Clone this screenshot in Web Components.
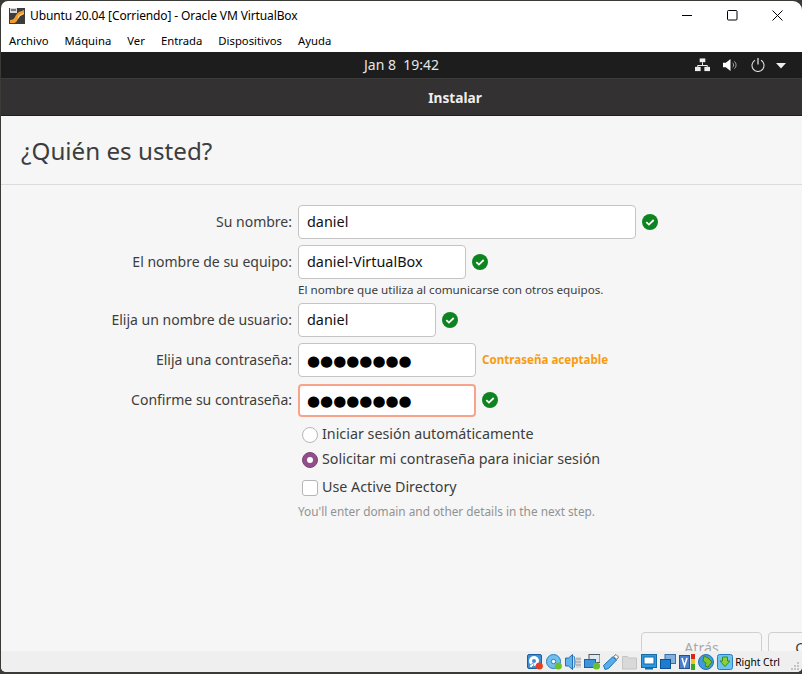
<!DOCTYPE html>
<html lang="es">
<head>
<meta charset="utf-8">
<title>Ubuntu 20.04 - Oracle VM VirtualBox</title>
<style>
html,body{margin:0;height:100%;background:#3a3a36;overflow:hidden}
</style>
</head>
<body>
<vb-window>
  <vb-titlebar slot="chrome">Ubuntu 20.04 [Corriendo] - Oracle VM VirtualBox</vb-titlebar>
  <vb-menubar slot="chrome"></vb-menubar>
  <gnome-topbar>Jan 8&nbsp;&nbsp;19:42</gnome-topbar>
  <installer-header>Instalar</installer-header>
  <installer-page heading="¿Quién es usted?">
    <form-row label="Su nombre:" width="338" value="daniel" status="ok"></form-row>
    <form-row label="El nombre de su equipo:" width="168" value="daniel-VirtualBox" status="ok" gap="6" help="El nombre que utiliza al comunicarse con otros equipos."></form-row>
    <form-row label="Elija un nombre de usuario:" width="138" value="daniel" status="ok" gap="4"></form-row>
    <form-row label="Elija una contraseña:" width="178" value="●●●●●●●●" secret status="Contraseña aceptable" gap="6"></form-row>
    <form-row label="Confirme su contraseña:" width="178" value="●●●●●●●●" secret focused status="ok" gap="7"></form-row>
    <login-options></login-options>
    <nav-buttons></nav-buttons>
  </installer-page>
  <vb-statusbar slot="status"></vb-statusbar>
</vb-window>

<script>
class VbWindow extends HTMLElement{
  constructor(){
    super()
    this.attachShadow({mode:"open"}).innerHTML = `
    <style>
    :host{display:block;height:100vh;box-sizing:border-box;padding:1px 0 2px 1px}
    .frame{height:100%;display:flex;flex-direction:column;background:#fff;border-radius:7px 9px 5px 5px;overflow:hidden;position:relative}
    .guest{flex:1;min-height:0;display:flex;flex-direction:column;overflow:hidden;background:#f6f6f6}
    </style>
    <div class="frame">
      <slot name="chrome"></slot>
      <div class="guest"><slot></slot></div>
      <slot name="status"></slot>
    </div>`
  }
}

class VbTitlebar extends HTMLElement{
  constructor(){
    super()
    this.attachShadow({mode:"open"}).innerHTML = `
    <style>
    :host{display:flex;align-items:center;height:29px;font:12px/16px "Noto Sans",sans-serif;color:#000;padding-left:8px;flex:none}
    .logo{width:16px;height:16px;margin-right:5px;flex:none}
    .text{flex:1;letter-spacing:-.12px}
    .btn{width:45px;height:29px;display:flex;align-items:center;justify-content:center}
    .btns{display:flex;margin-right:2px}
    </style>
    <svg class="logo" viewBox="0 0 16 16">
      <rect width="16" height="16" fill="#3c3c3c"/>
      <rect x="1" y="0" width="7" height="5" fill="#d9d9d9"/>
      <rect x="2" y="1" width="5" height="2" fill="#777"/>
      <path d="M1 12c3 0 4-1 5-3s2-4 4-5l5-2v4l-4 2c-1 1-2 3-3 5-1 1-2 2-3 2H1z" fill="#f29a2e"/>
      <path d="M9 8l3-2 3-1v1l-4 2-2 3z" fill="#ffd07a"/>
    </svg>
    <span class="text"><slot></slot></span>
    <div class="btns">
      <div class="btn"><svg width="11" height="11"><path d="M0 5.500h10" stroke="#000"/></svg></div>
      <div class="btn"><svg width="11" height="11"><rect x=".5" y=".5" width="9.500" height="9.500" rx="1" fill="none" stroke="#000"/></svg></div>
      <div class="btn"><svg width="11" height="11"><path d="M.5 .5l10 10M10.500 .5l-10 10" stroke="#000" fill="none"/></svg></div>
    </div>`
  }
}

class VbMenubar extends HTMLElement{
  constructor(){
    super()
    const items = ["Archivo","Máquina","Ver","Entrada","Dispositivos","Ayuda"]
    this.attachShadow({mode:"open"}).innerHTML = `
    <style>
    :host{display:flex;height:22px;align-items:center;gap:16px;padding-left:8px;font:11.3px/16px "Noto Sans",sans-serif;color:#000;flex:none}
    </style>
    ${items.map(i=>`<span>${i}</span>`).join("")}`
  }
}

class GnomeTopbar extends HTMLElement{
  constructor(){
    super()
    this.attachShadow({mode:"open"}).innerHTML = `
    <style>
    :host{display:flex;align-items:center;justify-content:center;height:27px;background:#1d1d1d;color:#e6e6e6;font:14px/18px "Noto Sans",sans-serif;position:relative;flex:none;box-sizing:border-box;border-bottom:1px solid #3b3b3b}
    .tray{position:absolute;right:16px;top:6px;display:flex;align-items:center;gap:13px;height:14px}
    svg{display:block}
    </style>
    <slot></slot>
    <div class="tray">
      <svg width="15" height="14" viewBox="0 0 16 14" fill="#eee"><rect x="5" y="0" width="6" height="4"/><path d="M7.500 4h1v3h5v2h-1V8H3.500v1h-1V7h5z"/><rect x="0" y="9" width="6" height="4.500"/><rect x="10" y="9" width="6" height="4.500"/></svg>
      <svg width="15" height="14" viewBox="0 0 16 14"><path d="M0 4.500h3L8 .5v13l-5-4H0z" fill="#fff"/><path d="M10 4.500a3 3 0 010 5M12 3a5 5 0 010 8" stroke="#aaa" fill="none"/></svg>
      <svg width="14" height="14" viewBox="0 0 14 14"><path d="M4 2.300a6 6 0 106 0" stroke="#ddd" fill="none" stroke-width="1.100"/><path d="M7 0v6.500" stroke="#eee" stroke-width="1.200"/></svg>
      <svg width="10" height="6" viewBox="0 0 10 6" style="margin:2px 0 0 -2px"><path d="M0 0h10L5 5.500z" fill="#eee"/></svg>
    </div>`
  }
}

class InstallerHeader extends HTMLElement{
  constructor(){
    super()
    this.attachShadow({mode:"open"}).innerHTML = `
    <style>
    :host{display:flex;align-items:center;justify-content:center;height:37px;box-sizing:border-box;padding:1px 0 0 107px;background:#333131;border-bottom:1px solid #1f1f1f;color:#eee;font:bold 13.7px/18px "Noto Sans",sans-serif;flex:none}
    </style>
    <slot></slot>`
  }
}

class InstallerPage extends HTMLElement{
  constructor(){
    super()
    this.attachShadow({mode:"open"}).innerHTML = `
    <style>
    :host{display:flex;flex-direction:column;flex:1;min-height:0;background:#f6f6f6;font-family:"Noto Sans",sans-serif}
    h1{margin:0;height:69px;box-sizing:border-box;padding:17px 0 0 20px;font:400 24.2px/36px "Noto Sans",sans-serif;color:#3d3d3d;border-bottom:1px solid #dcdcdc}
    .form{display:flex;flex-direction:column;padding-top:20px;flex:1}
    </style>
    <h1></h1>
    <div class="form"><slot></slot></div>`
  }
  connectedCallback(){
    this.shadowRoot.querySelector("h1").textContent = this.getAttribute("heading")
  }
}

class FormRow extends HTMLElement{
  constructor(){
    super()
    this.attachShadow({mode:"open"}).innerHTML = `
    <style>
    :host{display:grid;grid-template-columns:291px auto 1fr;column-gap:6px;align-items:center}
    .label{text-align:right;font-size:14px;color:#3d3d3d;white-space:nowrap;padding-bottom:2px}
    .entry{height:34px;box-sizing:border-box;border:1px solid #c4c4c4;border-radius:4px;background:#fff;padding:0 8px 2px;display:flex;align-items:center;font-size:14.4px;color:#111}
    .entry.secret{font:15px "DejaVu Sans",sans-serif;color:#000;padding:1px 8px 0}
    .entry.focused{border:2px solid #f7a48b;padding:1px 7px 0;height:33px}
    .status{display:flex;align-items:center;font:bold 11.6px "Noto Sans",sans-serif;color:#f99b11;padding-bottom:1px}
    .status svg{display:block}
    .help{grid-column:2 / 4;font-size:11.67px;line-height:16px;color:#3d3d3d;height:17px;margin-top:3px}
    </style>
    <div class="label"></div>
    <div class="entry"></div>
    <div class="status"></div>`
  }
  connectedCallback(){
    const root = this.shadowRoot
    root.querySelector(".label").textContent = this.getAttribute("label")
    const entry = root.querySelector(".entry")
    entry.textContent = this.getAttribute("value")
    entry.style.width = this.getAttribute("width") + "px"
    if(this.hasAttribute("secret")) entry.classList.add("secret")
    if(this.hasAttribute("focused")) entry.classList.add("focused")
    this.style.marginTop = (this.getAttribute("gap") || 0) + "px"
    const status = root.querySelector(".status")
    if(this.getAttribute("status") == "ok"){
      status.innerHTML = `<svg width="16" height="16" viewBox="0 0 16 16"><circle cx="8" cy="8" r="8" fill="#0e8420"/><path d="M4.300 8.200l2.600 2.400 4.800-4.600" fill="none" stroke="#fff" stroke-width="1.800"/></svg>`
    }else{
      status.textContent = this.getAttribute("status")
    }
    if(this.hasAttribute("help")){
      const help = document.createElement("div")
      help.className = "help"
      help.textContent = this.getAttribute("help")
      root.appendChild(help)
    }
  }
}

class LoginOptions extends HTMLElement{
  constructor(){
    super()
    this.attachShadow({mode:"open"}).innerHTML = `
    <style>
    :host{display:flex;flex-direction:column;padding-left:301px;color:#3d3d3d;font-size:14.3px;margin-top:5px}
    .opt{display:flex;align-items:center;gap:4px;height:25px}
    .opt span.t{padding-bottom:2px}
    .mark{width:16px;height:16px;box-sizing:border-box;border:1px solid #b6b6b6;background:#fff;border-radius:50%;flex:none}
    .mark.on{background:#924d8b;border-color:#7f4179;position:relative}
    .mark.on::after{content:"";position:absolute;left:4px;top:4px;width:6px;height:6px;border-radius:50%;background:#fff}
    .mark.box{border-radius:3px}
    .third{margin-top:3px}
    .hint{margin:3px 0 0 -4px;font-size:11.82px;line-height:16px;color:#929292}
    </style>
    <div class="opt"><span class="mark"></span><span class="t">Iniciar sesión automáticamente</span></div>
    <div class="opt"><span class="mark on"></span><span class="t">Solicitar mi contraseña para iniciar sesión</span></div>
    <div class="opt third"><span class="mark box"></span><span class="t">Use Active Directory</span></div>
    <div class="hint">You'll enter domain and other details in the next step.</div>`
  }
}

class NavButtons extends HTMLElement{
  constructor(){
    super()
    this.attachShadow({mode:"open"}).innerHTML = `
    <style>
    :host{display:flex;gap:6px;padding-left:640px;margin-top:auto;margin-bottom:-15px;width:max-content}
    .b{width:121px;height:34px;box-sizing:border-box;border:1px solid #cfcfcf;border-radius:4px;background:#f6f6f6;display:flex;justify-content:center;padding-top:6px;font-size:14.2px;line-height:18px;color:#a9a9a9}
    .next{color:#3d3d3d}
    </style>
    <div class="b">Atrás</div><div class="b next">Continuar</div>`
  }
}

class VbStatusbar extends HTMLElement{
  constructor(){
    super()
    const icons = [
      `<rect x=".5" y=".5" width="14" height="14" rx="1.500" fill="#3f8fd6" stroke="#1d5fa5"/><circle cx="7" cy="7" r="5" fill="#fff"/><circle cx="7" cy="7" r="2" fill="#3f8fd6"/><path d="M2 12l4-3 1 2-3 3z" fill="#fff" stroke="#1d5fa5" stroke-width=".5"/><circle cx="12.300" cy="12" r="3.600" fill="#e5401e"/>`,
      `<circle cx="7.500" cy="7.500" r="7" fill="#6fc0ee" stroke="#2a7cc0"/><circle cx="7.500" cy="7.500" r="2.200" fill="#fff" stroke="#2a7cc0"/><circle cx="12.300" cy="12" r="3.600" fill="#6cc02c"/>`,
      `<path d="M.5 4h3l4-3.500v15l-4-3.500h-3z" fill="#63b3e8" stroke="#1f70b6"/><path d="M8.500 2c1 0 1.500 3 1.500 6s-.5 6-1.500 6" fill="#9fd3f4" stroke="#1f70b6"/><rect x="11" y="3" width="5" height="11" fill="#d8d8d8"/><path d="M11 5h5M11 8h5M11 11h5" stroke="#999"/>`,
      `<rect x="5" y=".5" width="11" height="8" fill="#dfe8ef" stroke="#505a63"/><rect x=".5" y="5.500" width="11" height="8" fill="#3d94da" stroke="#1d5fa5"/><circle cx="12.500" cy="12" r="3.600" fill="#6cc02c"/>`,
      `<path d="M.5 11.500L9.500 3l4 3-8 8.500-3.500 1z" fill="#58aee8" stroke="#1f70b6"/><path d="M10.500 2.500L13 .5l2.500 2.500-1.500 2.500z" fill="#fff" stroke="#777"/>`,
      `<path d="M.5 2.500h5l1 1.500h8v11H.5z" fill="#d9d9d9" stroke="#c4c4c4"/>`,
      `<rect x=".5" y=".5" width="15" height="13" fill="#2f9ae0" stroke="#156aa8"/><rect x="3" y="3" width="10" height="7" fill="#fff" stroke="#156aa8"/><rect x="4" y="14" width="8" height="1.500" fill="#156aa8"/>`,
      `<rect x="5" y=".5" width="10.500" height="9" fill="#7fb0de" stroke="#3d6ea0"/><rect x=".5" y="5.500" width="10" height="9" fill="#1c7cd0" stroke="#0f4f8f"/>`,
      `<rect x=".5" y="1.500" width="10" height="13" fill="#4b7fcb" stroke="#2a4f8f"/><path d="M3 4l2.500 8L8 4" fill="none" stroke="#fff" stroke-width="1.500"/><rect x="12" y="0" width="4" height="5" fill="#d8261c"/><rect x="12" y="5" width="4" height="5" fill="#ebc81e"/><rect x="12" y="10" width="4" height="6" fill="#3aa62a"/>`,
      `<circle cx="8" cy="8" r="7.500" fill="#3f9ae0" stroke="#1f70b6"/><path d="M6 2l4 2 4 4-4 5-3-1 1-3-3-2z" fill="#7cc52f" stroke="#3f8a12"/>`,
      `<rect x=".5" y=".5" width="15" height="15" rx="2" fill="#6cc3ef" stroke="#2a7cc0"/><path d="M5.500 3h5v4h2.500L8 12.500 3 7h2.500z" fill="#8bd03c" stroke="#3f8a12"/>`
    ]
    this.attachShadow({mode:"open"}).innerHTML = `
    <style>
    :host{display:flex;align-items:center;justify-content:flex-end;height:21px;background:#efefef;flex:none;position:relative;padding-right:22px;font:10.2px/16px "Noto Sans",sans-serif;color:#000}
    .icons{display:flex;gap:3px}
    svg{display:block}
    .ctrl{margin-left:2px}
    .grip{position:absolute;right:2px;bottom:1px}
    </style>
    <div class="icons">
    ${icons.map(i=>`<svg width="16" height="16" viewBox="0 0 16 16">${i}</svg>`).join("")}
    </div>
    <span class="ctrl">Right Ctrl</span>
    <svg class="grip" width="10" height="10" fill="#c4c4c4"><rect x="7" y="1" width="2" height="2"/><rect x="4" y="4" width="2" height="2"/><rect x="7" y="4" width="2" height="2"/><rect x="1" y="7" width="2" height="2"/><rect x="4" y="7" width="2" height="2"/><rect x="7" y="7" width="2" height="2"/></svg>`
  }
}

customElements.define("vb-window",VbWindow)
customElements.define("vb-titlebar",VbTitlebar)
customElements.define("vb-menubar",VbMenubar)
customElements.define("gnome-topbar",GnomeTopbar)
customElements.define("installer-header",InstallerHeader)
customElements.define("installer-page",InstallerPage)
customElements.define("form-row",FormRow)
customElements.define("login-options",LoginOptions)
customElements.define("nav-buttons",NavButtons)
customElements.define("vb-statusbar",VbStatusbar)
</script>
</body>
</html>
